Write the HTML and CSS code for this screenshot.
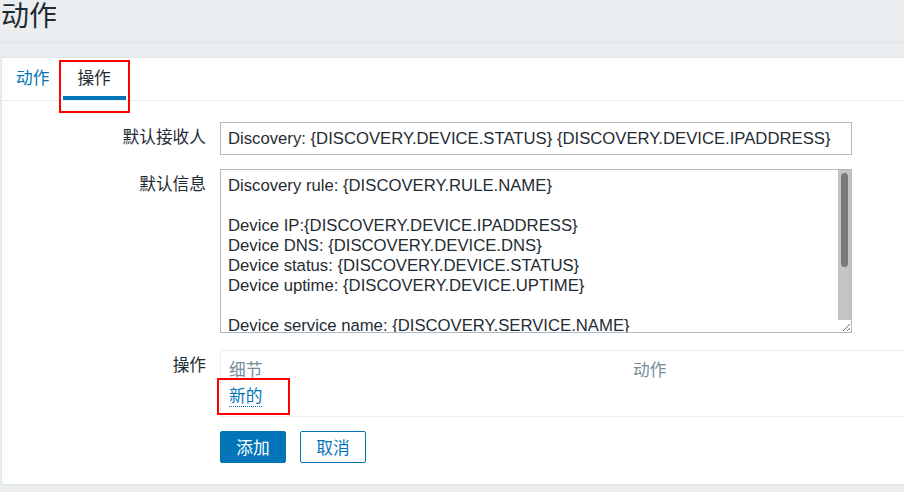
FILE: index.html
```html
<!DOCTYPE html>
<html lang="zh">
<head>
<meta charset="utf-8">
<title>动作</title>
<link rel="stylesheet" href="styles.css">
</head>
<body>
<div class="page">
  <header class="page-header">
    <h1 class="page-title">动作</h1>
  </header>
  <main class="panel">
    <nav class="tabs">
      <a class="tab">动作</a>
      <a class="tab tab-active">操作<span class="mark mark-tab"></span></a>
    </nav>
    <form class="form">
      <label class="form-label" for="subject">默认接收人</label>
      <div class="form-field">
        <input id="subject" class="text-input" type="text" value="Discovery: {DISCOVERY.DEVICE.STATUS} {DISCOVERY.DEVICE.IPADDRESS}">
      </div>
      <label class="form-label" for="message">默认信息</label>
      <div class="form-field">
        <div class="area-wrap">
          <textarea id="message" class="text-area">Discovery rule: {DISCOVERY.RULE.NAME}

Device IP:{DISCOVERY.DEVICE.IPADDRESS}
Device DNS: {DISCOVERY.DEVICE.DNS}
Device status: {DISCOVERY.DEVICE.STATUS}
Device uptime: {DISCOVERY.DEVICE.UPTIME}

Device service name: {DISCOVERY.SERVICE.NAME}
Device service port: {DISCOVERY.SERVICE.PORT}
Device service status: {DISCOVERY.SERVICE.STATUS}
Device service uptime: {DISCOVERY.SERVICE.UPTIME}</textarea>
          <div class="scrollbar"><div class="scroll-thumb"></div></div>
        </div>
      </div>
      <div class="form-label">操作</div>
      <div class="form-field">
        <div class="ops">
          <div class="ops-head">
            <span class="ops-col1">细节</span>
            <span class="ops-col2">动作</span>
          </div>
          <div class="ops-row">
            <span class="new-wrap"><a class="link-new">新的</a><span class="mark mark-new"></span></span>
          </div>
        </div>
      </div>
      <div class="form-label"></div>
      <div class="form-field buttons">
        <button type="button" class="btn btn-primary">添加</button>
        <button type="button" class="btn btn-alt">取消</button>
      </div>
    </form>
  </main>
</div>
</body>
</html>
```
FILE: styles.css
```css
html, body {
  margin: 0;
  padding: 0;
  background: #ebeef0;
  overflow: hidden;
}
body {
  font-family: "Liberation Sans", "Noto Sans CJK SC", sans-serif;
  font-size: 16.7px;
  color: #1f2c33;
  width: 904px;
  height: 492px;
}
.page {
  padding-left: 1px;
}
.page-header {
  height: 42px;
  border-bottom: 1px solid #dfe4e7;
  margin-left: -1px;
  padding-left: 1px;
}
.page-title {
  margin: 0;
  font-size: 28px;
  font-weight: normal;
  line-height: 33px;
  color: #1f2c33;
}
.panel {
  margin-top: 14px;
  margin-right: -30px;
  background: #fff;
  border: 1px solid #dfe4e7;
  padding-bottom: 21px;
}
.tabs {
  display: flex;
  height: 42px;
  border-bottom: 1px solid #ebeef0;
}
.tab {
  position: relative;
  padding: 0 14px;
  line-height: 41px;
  color: #0275b8;
  cursor: pointer;
}
.tab-active {
  color: #1f2c33;
  border-bottom: 4px solid #0275b8;
  height: 38px;
  padding: 0 15px 0 14px;
}
.mark {
  position: absolute;
  border: 2px solid #ff0000;
  pointer-events: none;
}
.mark-tab {
  left: -4px;
  right: -4px;
  top: 2px;
  bottom: -17px;
}
.form {
  display: grid;
  grid-template-columns: 204px 1fr;
  column-gap: 14px;
  padding-top: 21px;
}
.form-label {
  text-align: right;
  line-height: 32px;
  white-space: nowrap;
}
.form-field {
  min-width: 0;
}
.text-input {
  box-sizing: border-box;
  display: block;
  width: 632px;
  height: 33px;
  border: 1px solid #acbbc2;
  padding: 0 7px;
  font: inherit;
  color: #1f2c33;
  background: #fff;
  outline: none;
  margin-bottom: 14px;
}
.area-wrap {
  position: relative;
  width: 632px;
  margin-bottom: 17px;
}
.text-area {
  box-sizing: border-box;
  display: block;
  width: 632px;
  height: 164px;
  border: 1px solid #acbbc2;
  padding: 6px 20px 6px 7px;
  font: inherit;
  line-height: 20px;
  color: #1f2c33;
  background: #fff;
  outline: none;
  overflow: hidden;
  resize: both;
}
.scrollbar {
  position: absolute;
  top: 1px;
  right: 1px;
  width: 13px;
  height: 150px;
  background: #c4c4c4;
}
.scroll-thumb {
  margin: 3px 3px 0 3px;
  height: 94px;
  background: #7a7a7a;
  border-radius: 4px;
}
.ops {
  border: 1px solid #ebeef0;
  border-right: none;
  margin-right: -2px;
  margin-bottom: 14px;
}
.ops-head {
  display: flex;
  line-height: 20px;
  padding-top: 10px;
  color: #768d99;
}
.ops-col1 {
  width: 396px;
  padding-left: 8px;
}
.ops-col2 {
  padding-left: 8px;
}
.ops-row {
  padding: 6px 8px 9px;
  line-height: 20px;
}
.new-wrap {
  position: relative;
  display: inline-block;
}
.link-new {
  color: #0275b8;
  border-bottom: 1px dotted #0275b8;
  cursor: pointer;
}
.mark-new {
  left: -12px;
  right: -28px;
  top: -9px;
  bottom: -8px;
}
.buttons {
  display: flex;
  gap: 14px;
}
.btn {
  box-sizing: border-box;
  width: 66px;
  height: 32px;
  border-radius: 2px;
  font-family: "Liberation Sans", "Noto Sans CJK SC", sans-serif;
  font-size: 16.7px;
  padding: 0;
  cursor: pointer;
}
.btn-primary {
  background: #0275b8;
  border: 1px solid #0275b8;
  color: #fff;
}
.btn-alt {
  background: #fff;
  border: 1px solid #0275b8;
  color: #0275b8;
}
```
